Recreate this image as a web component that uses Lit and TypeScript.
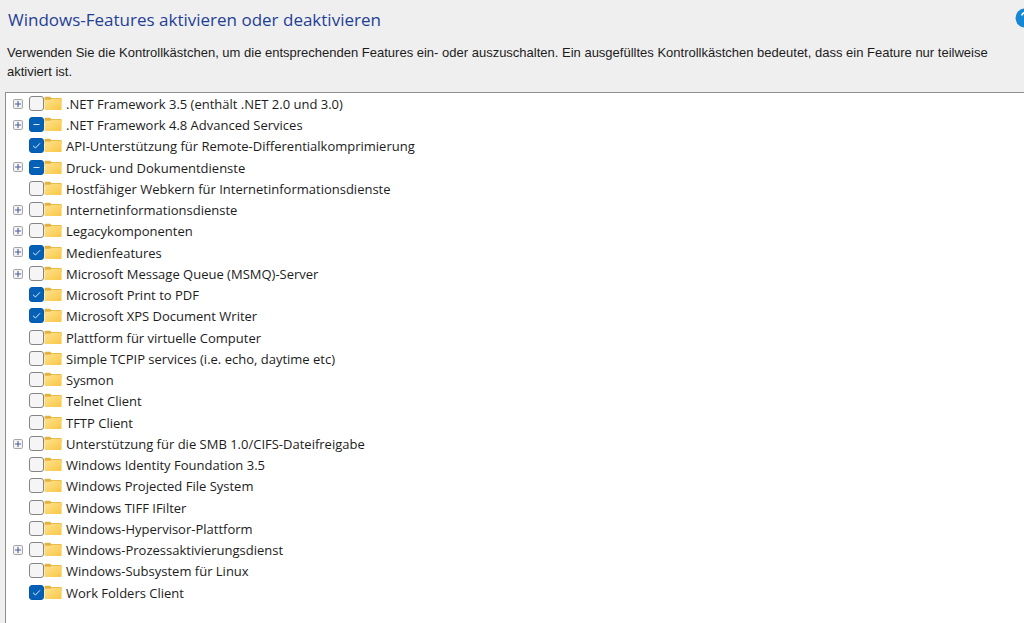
import { LitElement, html, css, svg, nothing } from "lit";
import { customElement, state } from "lit/decorators.js";

type Mark = "off" | "on" | "mixed";

interface Feature {
  name: string;
  mark: Mark;
  group?: boolean;
}

const FEATURES: Feature[] = [
  { name: ".NET Framework 3.5 (enthält .NET 2.0 und 3.0)", mark: "off", group: true },
  { name: ".NET Framework 4.8 Advanced Services", mark: "mixed", group: true },
  { name: "API-Unterstützung für Remote-Differentialkomprimierung", mark: "on" },
  { name: "Druck- und Dokumentdienste", mark: "mixed", group: true },
  { name: "Hostfähiger Webkern für Internetinformationsdienste", mark: "off" },
  { name: "Internetinformationsdienste", mark: "off", group: true },
  { name: "Legacykomponenten", mark: "off", group: true },
  { name: "Medienfeatures", mark: "on", group: true },
  { name: "Microsoft Message Queue (MSMQ)-Server", mark: "off", group: true },
  { name: "Microsoft Print to PDF", mark: "on" },
  { name: "Microsoft XPS Document Writer", mark: "on" },
  { name: "Plattform für virtuelle Computer", mark: "off" },
  { name: "Simple TCPIP services (i.e. echo, daytime etc)", mark: "off" },
  { name: "Sysmon", mark: "off" },
  { name: "Telnet Client", mark: "off" },
  { name: "TFTP Client", mark: "off" },
  { name: "Unterstützung für die SMB 1.0/CIFS-Dateifreigabe", mark: "off", group: true },
  { name: "Windows Identity Foundation 3.5", mark: "off" },
  { name: "Windows Projected File System", mark: "off" },
  { name: "Windows TIFF IFilter", mark: "off" },
  { name: "Windows-Hypervisor-Plattform", mark: "off" },
  { name: "Windows-Prozessaktivierungsdienst", mark: "off", group: true },
  { name: "Windows-Subsystem für Linux", mark: "off" },
  { name: "Work Folders Client", mark: "on" },
];

@customElement("app-root")
export class AppRoot extends LitElement {
  static styles = css`
    :host {
      display: flex;
      flex-direction: column;
      min-height: 100vh;
      box-sizing: border-box;
      overflow: hidden;
      background: #efefef;
      color: #1c1c1c;
      font-family: "Segoe UI", "Open Sans", "Noto Sans", sans-serif;
      font-size: 13px;
      line-height: 19px;
    }
    .head {
      display: flex;
      justify-content: space-between;
      align-items: flex-start;
      padding: 8px 0 0 8px;
    }
    .title {
      margin: 0;
      font-size: 17px;
      line-height: 24px;
      font-weight: 400;
      color: #1f3f95;
    }
    .help {
      flex: none;
      width: 20px;
      height: 20px;
      margin: 0 -11px 0 0;
      padding: 0;
      border: 0;
      background: none;
    }
    .intro {
      margin: 0;
      padding: 11px 8px 11px 7px;
      font-family: "Segoe UI", "Liberation Sans", Arial, sans-serif;
    }
    .panel {
      flex: 1;
      margin-left: 5px;
      border: solid #8f8f8f;
      border-width: 1px 0 0 1px;
      background: #fff;
    }
    .list {
      list-style: none;
      margin: 0;
      padding: 0 0 0 7px;
    }
    .row {
      display: grid;
      grid-template-columns: 16px 15px 18px 1fr;
      align-items: center;
      height: 21px;
    }
    .row:nth-child(4n) {
      height: 22px;
    }
    .expand {
      width: 10px;
      height: 10px;
      padding: 0;
      border: 0;
      background: none;
    }
    .box {
      position: relative;
      display: block;
      width: 15px;
      height: 15px;
    }
    .check {
      appearance: none;
      display: block;
      box-sizing: border-box;
      width: 15px;
      height: 15px;
      margin: 0;
      border: 1px solid #858585;
      border-radius: 3px;
      background: #f5f5f5;
    }
    .check:checked,
    .check:indeterminate {
      border-color: #005bb0;
      background: #0560b6;
    }
    .mark {
      position: absolute;
      inset: 0;
      pointer-events: none;
    }
    .name {
      padding: 2px 0 0 4px;
      white-space: nowrap;
    }
    svg {
      display: block;
    }
  `;

  @state() private features: Feature[] = FEATURES;

  private toggle(index: number) {
    this.features = this.features.map((f, i) =>
      i === index ? { ...f, mark: f.mark === "off" ? "on" : "off" } : f
    );
  }

  private renderMark(mark: Mark) {
    if (mark === "off") return nothing;
    return html`<svg class="mark" width="15" height="15" viewBox="0 0 15 15" fill="none" stroke="#d9ecff" aria-hidden="true">
      ${mark === "on" ? svg`<path d="M4 7.7 6.4 10 11 5.3" />` : svg`<path d="M4.5 7.5h6" />`}
    </svg>`;
  }

  private renderRow(f: Feature, i: number) {
    return html`<li class="row">
      ${f.group
        ? html`<button class="expand" aria-label="${f.name} erweitern">
            <svg width="10" height="10" viewBox="0 0 10 10" fill="none" aria-hidden="true">
              <rect x=".6" y=".6" width="8.8" height="8.8" rx=".8" fill="#f8f8f8" stroke="#9d9d9d" />
              <path d="M2 5h6M5 2v6" stroke="#4a5c98" stroke-width="1.1" />
            </svg>
          </button>`
        : html`<span></span>`}
      <span class="box">
        <input
          class="check"
          type="checkbox"
          id="feature-${i}"
          .checked=${f.mark === "on"}
          .indeterminate=${f.mark === "mixed"}
          @change=${() => this.toggle(i)}
        />
        ${this.renderMark(f.mark)}
      </span>
      <svg width="18" height="15" viewBox="0 0 18 15" aria-hidden="true">
        <path d="M.5 1.7Q.5.7 1.5.7H6l1.5 1.2H17q.6 0 .6.7V6H.5z" fill="#e3b340" />
        <path d="M.5 3.8h5.8L7.7 2.8H17q.6 0 .6.6v9.9q0 .7-.7.7H1.2q-.7 0-.7-.7z" fill="url(#folder)" />
      </svg>
      <label class="name" for="feature-${i}">${f.name}</label>
    </li>`;
  }

  render() {
    return html`
      <header class="head">
        <h1 class="title">Windows-Features aktivieren oder deaktivieren</h1>
        <button class="help" aria-label="Hilfe">
          <svg width="20" height="20" viewBox="0 0 20 20" aria-hidden="true">
            <defs>
              <linearGradient id="folder" x1="0" y1="0" x2="1" y2="1">
                <stop offset="0" stop-color="#ffe390" />
                <stop offset="1" stop-color="#f8c644" />
              </linearGradient>
            </defs>
            <circle cx="10" cy="10" r="9.5" fill="#1687d3" />
            <path d="M7 7.6C7 3.8 13 4 13 7.6c0 2.3-3 2.2-3 4.6M10 14v1.8" fill="none" stroke="#fff" stroke-width="1.7" />
          </svg>
        </button>
      </header>
      <p class="intro">
        Verwenden Sie die Kontrollkästchen, um die entsprechenden Features ein- oder auszuschalten. Ein ausgefülltes
        Kontrollkästchen bedeutet, dass ein Feature nur teilweise aktiviert ist.
      </p>
      <main class="panel">
        <ul class="list">
          ${this.features.map((f, i) => this.renderRow(f, i))}
        </ul>
      </main>
    `;
  }
}
